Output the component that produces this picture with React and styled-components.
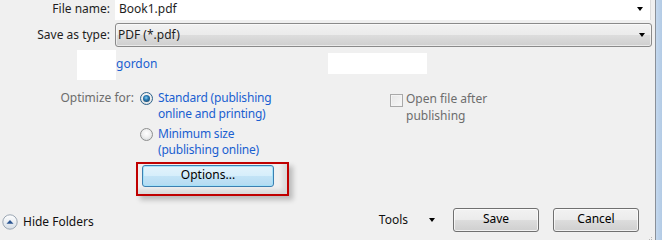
import React from 'react';
import styled, { createGlobalStyle } from 'styled-components';

const Global = createGlobalStyle`
  html, body { margin: 0; padding: 0; background: #f0f0f0; }
  body { font-family: "Noto Sans", "Liberation Sans", sans-serif; font-size: 12px; color: #1e1e1e; }
  * { box-sizing: border-box; }
`;

const Window = styled.div`
  display: flex;
  width: 662px;
  height: 240px;
  overflow: hidden;
  background: #f0f0f0;
`;

const Main = styled.div`
  flex: 0 0 655px;
  display: flex;
  flex-direction: column;
  position: relative;
`;

const Frame = styled.div`
  flex: 1;
  border-left: 1px solid #8a9098;
  background: linear-gradient(to right, #c4d8ee, #b3cbe5);
`;

const FieldRow = styled.div`
  display: grid;
  grid-template-columns: 110px 1fr;
  column-gap: 5px;
  align-items: center;
  height: ${p => p.$h}px;
  margin-top: ${p => p.$mt || 0}px;
  margin-right: ${p => p.$mr || 0}px;
`;

const Label = styled.div`
  text-align: right;
  white-space: nowrap;
  line-height: 16px;
  color: ${p => (p.$muted ? '#6d6d6d' : '#1e1e1e')};
  padding-bottom: ${p => p.$pb || 0}px;
`;

const TextField = styled.div`
  height: 100%;
  background: #fff;
  border-right: 1px solid #dcdcdc;
  display: flex;
  align-items: center;
  justify-content: space-between;
  padding: 0 7px 3px 4px;
  line-height: 16px;
`;

const Combo = styled.div`
  height: 100%;
  border: 1px solid #8a8a8a;
  border-radius: 3px;
  background: linear-gradient(to bottom, #f2f2f2 0%, #ebebeb 50%, #dddddd 50%, #cfcfcf 100%);
  box-shadow: inset 0 0 0 1px rgba(255, 255, 255, 0.55);
  display: flex;
  align-items: center;
  justify-content: space-between;
  padding: 0 6px 0 2px;
  line-height: 16px;
`;

const Caret = styled.span`
  width: 0;
  height: 0;
  border-left: 3.5px solid transparent;
  border-right: 3.5px solid transparent;
  border-top: 4px solid #000;
  display: inline-block;
`;

const InfoRow = styled.div`
  display: flex;
  align-items: flex-start;
  margin-top: 3px;
  height: 30px;
`;

const Blank = styled.div`
  background: #fff;
  flex: 0 0 ${p => p.$w}px;
  height: ${p => p.$h}px;
  margin-left: ${p => p.$ml || 0}px;
  margin-top: ${p => p.$mt || 0}px;
`;

const UserName = styled.div`
  flex: 0 0 212px;
  margin-top: 6px;
  line-height: 16px;
  color: #1a5fd0;
`;

const OptimizeRow = styled.div`
  display: flex;
  align-items: flex-start;
  margin-top: 10px;
`;

const OptimizeLabel = styled.div`
  flex: 0 0 134px;
  text-align: right;
  line-height: 16px;
  color: #6d6d6d;
`;

const RadioGroup = styled.div`
  flex: 0 0 250px;
  margin-left: 6px;
  display: flex;
  flex-direction: column;
  gap: 4px;
`;

const RadioOption = styled.div`
  display: flex;
  align-items: flex-start;
  gap: 5px;
`;

const RadioMark = styled.span`
  flex: 0 0 13px;
  height: 13px;
  margin-top: 2px;
  border-radius: 50%;
  border: 1px solid ${p => (p.$on ? '#2c628b' : '#8e8f8f')};
  background: radial-gradient(circle at 50% 40%, #ffffff 0%, #f0f0f0 45%, #cfd3d6 100%);
  display: flex;
  align-items: center;
  justify-content: center;
  &::after {
    content: '';
    display: ${p => (p.$on ? 'block' : 'none')};
    width: 7px;
    height: 7px;
    border-radius: 50%;
    background: radial-gradient(circle at 45% 40%, #8fd3f6 0%, #2c7fb8 35%, #0d2f4d 100%);
  }
`;

const OptionText = styled.div`
  line-height: 16px;
  color: #1a5fd0;
  letter-spacing: -0.2px;
  white-space: nowrap;
`;

const CheckOption = styled.div`
  display: flex;
  align-items: flex-start;
  gap: 3px;
`;

const CheckBox = styled.span`
  flex: 0 0 13px;
  height: 13px;
  margin-top: 4px;
  border: 1px solid #a9a9a9;
  background: linear-gradient(135deg, #e6e6e6, #f8f8f8);
  box-shadow: inset 0 0 0 1px #f4f4f4;
`;

const CheckText = styled.div`
  line-height: 17px;
  color: #6d6d6d;
  white-space: nowrap;
`;

const Highlight = styled.div`
  margin-top: 4px;
  margin-left: 136px;
  width: 153px;
  height: 34px;
  border: 2px solid #c00000;
  padding: 1px 0 0 4px;
  box-shadow: 4px 4px 5px rgba(0, 0, 0, 0.22), inset -4px -4px 5px rgba(0, 0, 0, 0.1);
`;

const Button = styled.button`
  font: inherit;
  color: #000;
  width: ${p => p.$w}px;
  height: ${p => p.$h}px;
  border-radius: 3px;
  padding: 0 0 2px;
  line-height: 16px;
  cursor: default;
  border: 1px solid ${p => (p.$focus ? '#3c7fb1' : '#707070')};
  background: ${p =>
    p.$focus
      ? 'linear-gradient(to bottom, #e3f2fb 0%, #d6eefb 48%, #c2e3f6 52%, #b4dbf2 100%)'
      : 'linear-gradient(to bottom, #f2f2f2 0%, #ebebeb 50%, #dddddd 50%, #cfcfcf 100%)'};
  box-shadow: inset 0 0 0 1px ${p => (p.$focus ? 'rgba(160, 225, 250, 0.9)' : 'rgba(255, 255, 255, 0.7)')};
`;

const BottomBar = styled.div`
  display: flex;
  align-items: center;
  margin-top: 12px;
  height: 24px;
  margin-right: 16px;
`;

const HideFolders = styled.div`
  display: flex;
  align-items: center;
  gap: 5px;
  margin-left: 2px;
  padding-top: 4px;
  line-height: 16px;
  color: #111;
`;

const Spacer = styled.div`
  flex: 1;
`;

const Tools = styled.div`
  display: flex;
  align-items: center;
  gap: 21px;
  margin-right: 18px;
  line-height: 16px;
  color: #111;
`;

const Buttons = styled.div`
  display: flex;
  gap: 14px;
`;

const Grip = styled.svg`
  position: absolute;
  right: 1px;
  bottom: 0;
`;

function HideIcon() {
  return (
    <svg width="16" height="16" viewBox="0 0 16 16">
      <defs>
        <linearGradient id="hf" x1="0" y1="0" x2="0" y2="1">
          <stop offset="0" stopColor="#ffffff" />
          <stop offset="1" stopColor="#d5dde6" />
        </linearGradient>
      </defs>
      <circle cx="8" cy="8" r="7.2" fill="url(#hf)" stroke="#9aa6b3" strokeWidth="1" />
      <path d="M4.5 9.8 L8 6 L11.5 9.8 Z" fill="#2a5592" />
    </svg>
  );
}

export default function App() {
  return (
    <>
      <Global />
      <Window>
        <Main>
          <FieldRow $h={20} $mr={4}>
            <Label $pb={2}>File name:</Label>
            <TextField>
              <span>Book1.pdf</span>
              <Caret />
            </TextField>
          </FieldRow>
          <FieldRow $h={24} $mt={3} $mr={3}>
            <Label>Save as type:</Label>
            <Combo>
              <span>PDF (*.pdf)</span>
              <Caret />
            </Combo>
          </FieldRow>
          <InfoRow>
            <Blank $w={39} $h={30} $ml={77} />
            <UserName>gordon</UserName>
            <Blank $w={99} $h={21} $mt={3} />
          </InfoRow>
          <OptimizeRow>
            <OptimizeLabel>Optimize for:</OptimizeLabel>
            <RadioGroup>
              <RadioOption>
                <RadioMark $on />
                <OptionText>
                  Standard (publishing
                  <br />
                  online and printing)
                </OptionText>
              </RadioOption>
              <RadioOption>
                <RadioMark />
                <OptionText>
                  Minimum size
                  <br />
                  (publishing online)
                </OptionText>
              </RadioOption>
            </RadioGroup>
            <CheckOption>
              <CheckBox />
              <CheckText>
                Open file after
                <br />
                publishing
              </CheckText>
            </CheckOption>
          </OptimizeRow>
          <Highlight>
            <Button $w={132} $h={22} $focus>Options...</Button>
          </Highlight>
          <BottomBar>
            <HideFolders>
              <HideIcon />
              <span>Hide Folders</span>
            </HideFolders>
            <Spacer />
            <Tools>
              <span>Tools</span>
              <Caret />
            </Tools>
            <Buttons>
              <Button $w={86} $h={24}>Save</Button>
              <Button $w={86} $h={24}>Cancel</Button>
            </Buttons>
          </BottomBar>
          <Grip width="8" height="4" viewBox="0 0 8 4">
            <rect x="5" y="1" width="1" height="1" fill="#b8b8b8" />
            <rect x="5" y="3" width="1" height="1" fill="#b8b8b8" />
            <rect x="3" y="3" width="1" height="1" fill="#b8b8b8" />
          </Grip>
        </Main>
        <Frame />
      </Window>
    </>
  );
}
